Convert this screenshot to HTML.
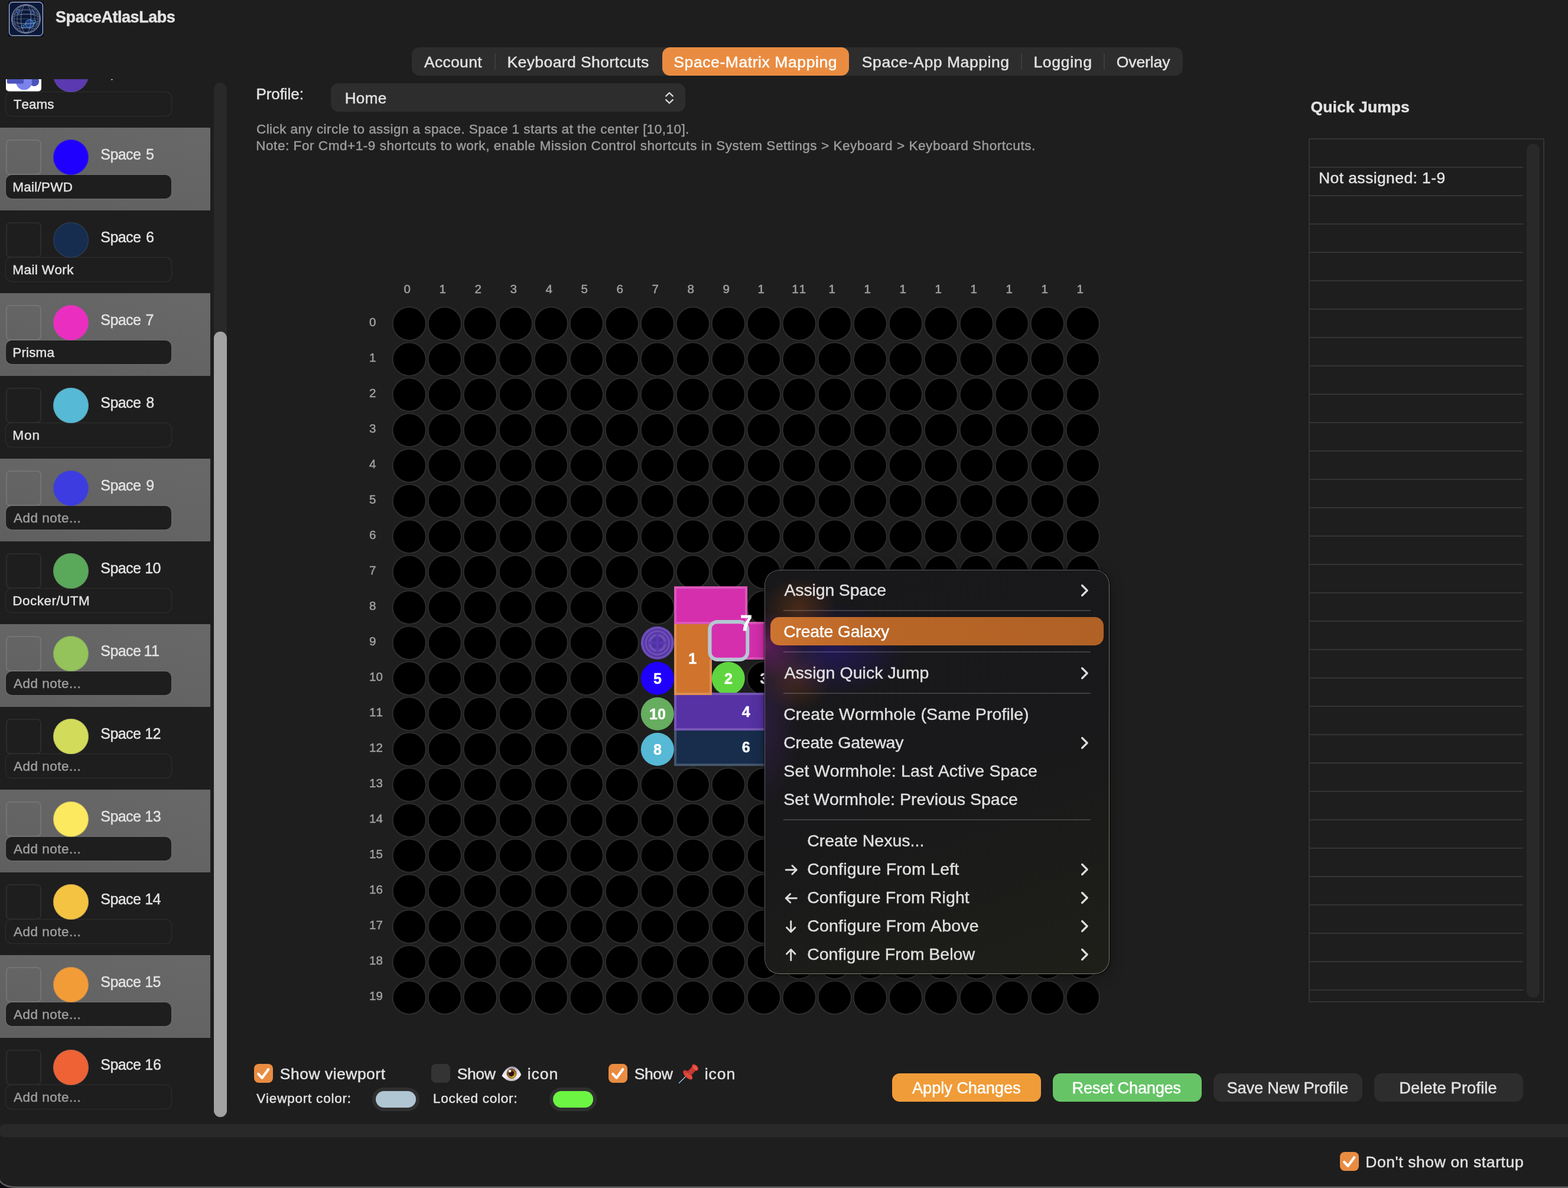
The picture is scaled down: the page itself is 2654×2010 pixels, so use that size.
<!DOCTYPE html>
<html lang="en"><head><meta charset="utf-8"><title>SpaceAtlasLabs</title>
<style>
*{box-sizing:border-box;margin:0;padding:0}
html,body{width:2654px;height:2010px;overflow:hidden;background:#1e1e1e}
body{font-family:"Liberation Sans",sans-serif;color:#e2e2e2;position:relative;-webkit-font-smoothing:antialiased}
.a,.t{position:absolute}
.t{white-space:nowrap;display:block;font-weight:400;font-kerning:none;-webkit-text-stroke:.45px currentColor}
svg text{font-family:"Liberation Sans",sans-serif;font-kerning:none;stroke:currentColor;stroke-width:.5px;paint-order:stroke}
#app{position:absolute;left:0;top:0;width:2654px;height:2010px;overflow:hidden;background:#1e1e1e;will-change:transform;transform:translateZ(0)}
.tabs{left:697px;top:80px;width:1305px;height:48px;border-radius:13px;background:#2d2d2d}
.tabsel{left:1121px;top:80px;width:316px;height:48px;border-radius:13px;background:#e98c41}
.sep{width:2px;height:28px;top:90px;background:#3d3d3d;border-radius:1px}
.select{left:560px;top:141px;width:600px;height:48px;border-radius:13px;background:#2d2d2d}
.sidebar{left:0;top:134px;width:360px;height:1762px;overflow:hidden}
.row{position:absolute;left:0;width:356px;height:140px}
.row.hl{background:linear-gradient(15deg,#5f5f5f 0%,#646464 45%,#686868 100%)}
.box{position:absolute;left:10px;top:20px;width:60px;height:59.500px;border-radius:7px;border:2px solid #2c2c2c;background:#1e1e1e}
.hl .box{border-color:#747474;background:transparent}
.dot{position:absolute;left:90px;top:20px;width:60px;height:60px;border-radius:50%;box-shadow:inset 0 0 0 1px rgba(110,110,110,.35)}
.note{position:absolute;left:10px;top:80px;width:280px;height:40px;border-radius:10px;background:#1e1e1e;box-shadow:0 0 0 1.3px #2c2c2c}
.hl .note{box-shadow:0 0 0 1.3px #6c6c6c}
.track{left:362px;top:140px;width:22px;height:1750px;border-radius:11px;background:#292929}
.thumb{left:362px;top:561px;width:22px;height:1329px;border-radius:11px;background:#a3a3a3}
.cb{width:32px;height:32px;border-radius:8px;background:#e98c41}
.cb.off{background:#343434}
.well{width:80px;height:40px;border-radius:20px;background:#2f2f2f}
.well i{position:absolute;left:6px;top:6px;width:68px;height:28px;border-radius:14px;display:block}
.btn{top:1816px;width:252px;height:48px;border-radius:13px;background:#2d2d2d}
.band{left:0;top:1902px;width:2654px;height:22px;background:#292929;border-radius:7px 0 0 7px}
.qj{left:2214.500px;top:233.500px;width:399.500px;height:1462.500px;border:2px solid #333}
.qline{left:2216px;width:362px;height:2px;background:#343434}
.menu{left:1294px;top:964px;width:584px;height:684px;border-radius:25px;overflow:hidden;
 box-shadow:0 0 0 1px rgba(0,0,0,.55),0 6px 26px rgba(0,0,0,.28),0 0 6px rgba(0,0,0,.35);
 background:
  radial-gradient(ellipse 62px 52px at 58px 64px, rgba(120,60,22,.5), rgba(120,60,22,0) 100%),
  radial-gradient(ellipse 66px 58px at 0px 128px, rgba(155,35,130,.52), rgba(155,35,130,0) 100%),
  radial-gradient(ellipse 130px 78px at 115px 136px, rgba(42,26,130,.55), rgba(42,26,130,0) 100%),
  radial-gradient(ellipse 60px 150px at 0px 255px, rgba(75,40,125,.34), rgba(75,40,125,0) 100%),
  radial-gradient(ellipse 62px 60px at 52px 182px, rgba(125,62,30,.45), rgba(125,62,30,0) 100%),
  linear-gradient(160deg, #18171a 0%, #19181a 50%, #1e1f19 100%)}
.menu:after{content:"";position:absolute;inset:0;border-radius:25px;border:1.6px solid;border-color:rgba(255,255,255,.33) rgba(225,225,200,.5) rgba(225,225,200,.52) rgba(255,255,255,.3);pointer-events:none}
.mhl{left:10px;top:80px;width:564px;height:48px;border-radius:15px;background:linear-gradient(90deg,#cd7430 0%,#b96627 30%,#b06126 100%)}
.msep{left:32px;width:520px;height:2px;background:rgba(255,255,255,.17)}
svg{position:absolute;overflow:visible}
</style></head><body><div id="app">
<header>
<svg class="logo" style="left:14px;top:2px" width="60" height="60" viewBox="0 0 60 60">
<rect width="60" height="60" fill="#091229"/>
<rect x="1.6" y="1.6" width="56.8" height="56.8" rx="6" fill="#0b1838" stroke="#b4c0dc" stroke-width="1.2"/>
<ellipse cx="36" cy="38.3" rx="11.5" ry="3.4" transform="rotate(-24 36 38.3)" fill="none" stroke="#3b9ce0" stroke-width=".9"/>
<circle cx="36" cy="38.3" r="6.9" fill="#1d3c84" stroke="#46a4e6" stroke-width="1"/>
<g fill="#132a62" fill-opacity=".7" stroke="#5a86d0" stroke-width=".8"><circle cx="17" cy="17.5" r="3.2"/><circle cx="41" cy="19" r="2.9"/><circle cx="24.500" cy="43" r="2.6"/></g>
<g fill="none" stroke="#b0bbd6" opacity=".72">
<circle cx="30" cy="30" r="24.2" stroke-width="1.3"/>
<circle cx="30" cy="30" r="22.6" stroke-width=".6"/>
<ellipse cx="30" cy="30" rx="8.5" ry="24" stroke-width=".8"/>
<ellipse cx="30" cy="30" rx="15" ry="24" stroke-width=".6"/>
<ellipse cx="30" cy="30" rx="20" ry="24" stroke-width=".5"/>
<ellipse cx="30" cy="30" rx="24" ry="8" stroke-width=".7"/>
<ellipse cx="30" cy="30" rx="24" ry="15" stroke-width=".6"/>
<path d="M9 22H51M7 30H53M9 38H51M14 14H46M14 46H46" stroke-width=".5"/>
</g>
</svg>
<h1 class="t" style="left:94.06px;top:13px;font-size:27px;line-height:32px;letter-spacing:-0.443px;color:#e2e2e2;font-weight:700;">SpaceAtlasLabs</h1>
</header>
<nav>
<div class="a tabs"></div><div class="a tabsel"></div>
<div class="a sep" style="left:837px"></div>
<div class="a sep" style="left:1728px"></div>
<div class="a sep" style="left:1868px"></div>
<span class="t" style="left:718.00px;top:89px;font-size:26.5px;line-height:32px;letter-spacing:0.295px;color:#e2e2e2;">Account</span>
<span class="t" style="left:858.43px;top:89px;font-size:26.5px;line-height:32px;letter-spacing:0.416px;color:#e2e2e2;">Keyboard Shortcuts</span>
<span class="t" style="left:1140.36px;top:89px;font-size:26.5px;line-height:32px;letter-spacing:0.580px;color:#ffffff;">Space-Matrix Mapping</span>
<span class="t" style="left:1458.86px;top:89px;font-size:26.5px;line-height:32px;letter-spacing:0.563px;color:#e2e2e2;">Space-App Mapping</span>
<span class="t" style="left:1749.43px;top:89px;font-size:26.5px;line-height:32px;letter-spacing:0.709px;color:#e2e2e2;">Logging</span>
<span class="t" style="left:1889.86px;top:89px;font-size:26.5px;line-height:32px;letter-spacing:-0.126px;color:#e2e2e2;">Overlay</span>
</nav>
<aside class="a sidebar">
<div class="row" style="top:-58px">
<div class="note"></div>
<svg style="left:10px;top:20px" width="60" height="59" viewBox="0 0 60 59"><path d="M0 0H60V53.500a5 5 0 0 1-5 5H5a5 5 0 0 1-5-5Z" fill="#fff"/>
<circle cx="47.9" cy="41.7" r="8.2" fill="#4b53bc"/><circle cx="30.7" cy="42.6" r="13.5" fill="#7b83eb"/><rect x="1.8" y="19" width="28.500" height="27" rx="2.500" fill="#3d45a8" opacity=".35"/><rect x="1.8" y="18" width="28" height="27.3" rx="2.500" fill="#4b53bc"/></svg>
<div class="dot" style="background:#5b39b0"></div>
<label class="lbl"><span class="t" style="left:170.33px;top:30px;font-size:25px;line-height:30px;letter-spacing:-0.576px;color:#e2e2e2;">Space</span> <span class="t" style="left:247.32px;top:30px;font-size:25px;line-height:30px;letter-spacing:0.000px;color:#e2e2e2;">4</span></label>
<span class="t" style="left:22.67px;top:87px;font-size:22.5px;line-height:27px;letter-spacing:0.037px;color:#e2e2e2;">Teams</span>
</div>
<div class="row hl" style="top:82px">
<div class="note"></div>
<div class="box"></div>
<div class="dot" style="background:#1f00ff"></div>
<label class="lbl"><span class="t" style="left:170.33px;top:30px;font-size:25px;line-height:30px;letter-spacing:-0.576px;color:#e2e2e2;">Space</span> <span class="t" style="left:247.12px;top:30px;font-size:25px;line-height:30px;letter-spacing:0.000px;color:#e2e2e2;">5</span></label>
<span class="t" style="left:21.35px;top:87px;font-size:22.5px;line-height:27px;letter-spacing:0.227px;color:#e2e2e2;">Mail/PWD</span>
</div>
<div class="row" style="top:222px">
<div class="note"></div>
<div class="box"></div>
<div class="dot" style="background:#172d4f"></div>
<label class="lbl"><span class="t" style="left:170.33px;top:30px;font-size:25px;line-height:30px;letter-spacing:-0.576px;color:#e2e2e2;">Space</span> <span class="t" style="left:247.12px;top:30px;font-size:25px;line-height:30px;letter-spacing:0.000px;color:#e2e2e2;">6</span></label>
<span class="t" style="left:21.35px;top:87px;font-size:22.5px;line-height:27px;letter-spacing:0.394px;color:#e2e2e2;">Mail Work</span>
</div>
<div class="row hl" style="top:362px">
<div class="note"></div>
<div class="box"></div>
<div class="dot" style="background:#ea2fc0"></div>
<label class="lbl"><span class="t" style="left:170.33px;top:30px;font-size:25px;line-height:30px;letter-spacing:-0.576px;color:#e2e2e2;">Space</span> <span class="t" style="left:246.47px;top:30px;font-size:25px;line-height:30px;letter-spacing:0.000px;color:#e2e2e2;">7</span></label>
<span class="t" style="left:21.35px;top:87px;font-size:22.5px;line-height:27px;letter-spacing:0.115px;color:#e2e2e2;">Prisma</span>
</div>
<div class="row" style="top:502px">
<div class="note"></div>
<div class="box"></div>
<div class="dot" style="background:#56b9d5"></div>
<label class="lbl"><span class="t" style="left:170.33px;top:30px;font-size:25px;line-height:30px;letter-spacing:-0.576px;color:#e2e2e2;">Space</span> <span class="t" style="left:247.22px;top:30px;font-size:25px;line-height:30px;letter-spacing:0.000px;color:#e2e2e2;">8</span></label>
<span class="t" style="left:21.35px;top:87px;font-size:22.5px;line-height:27px;letter-spacing:1.008px;color:#e2e2e2;">Mon</span>
</div>
<div class="row hl" style="top:642px">
<div class="note"></div>
<div class="box"></div>
<div class="dot" style="background:#3c3ce0"></div>
<label class="lbl"><span class="t" style="left:170.33px;top:30px;font-size:25px;line-height:30px;letter-spacing:-0.576px;color:#e2e2e2;">Space</span> <span class="t" style="left:247.22px;top:30px;font-size:25px;line-height:30px;letter-spacing:0.000px;color:#e2e2e2;">9</span></label>
<span class="t" style="left:23.11px;top:87px;font-size:22.5px;line-height:27px;letter-spacing:0.469px;color:#9e9e9e;">Add note...</span>
</div>
<div class="row" style="top:782px">
<div class="note"></div>
<div class="box"></div>
<div class="dot" style="background:#5aa85a"></div>
<label class="lbl"><span class="t" style="left:170.33px;top:30px;font-size:25px;line-height:30px;letter-spacing:-0.576px;color:#e2e2e2;">Space</span> <span class="t" style="left:245.34px;top:30px;font-size:25px;line-height:30px;letter-spacing:-0.639px;color:#e2e2e2;">10</span></label>
<span class="t" style="left:21.35px;top:87px;font-size:22.5px;line-height:27px;letter-spacing:0.462px;color:#e2e2e2;">Docker/UTM</span>
</div>
<div class="row hl" style="top:922px">
<div class="note"></div>
<div class="box"></div>
<div class="dot" style="background:#93c35a"></div>
<label class="lbl"><span class="t" style="left:170.33px;top:30px;font-size:25px;line-height:30px;letter-spacing:-0.576px;color:#e2e2e2;">Space</span> <span class="t" style="left:243.52px;top:30px;font-size:25px;line-height:30px;letter-spacing:-1.300px;color:#e2e2e2;">11</span></label>
<span class="t" style="left:23.11px;top:87px;font-size:22.5px;line-height:27px;letter-spacing:0.469px;color:#9e9e9e;">Add note...</span>
</div>
<div class="row" style="top:1062px">
<div class="note"></div>
<div class="box"></div>
<div class="dot" style="background:#d3dc5a"></div>
<label class="lbl"><span class="t" style="left:170.33px;top:30px;font-size:25px;line-height:30px;letter-spacing:-0.576px;color:#e2e2e2;">Space</span> <span class="t" style="left:245.34px;top:30px;font-size:25px;line-height:30px;letter-spacing:-0.744px;color:#e2e2e2;">12</span></label>
<span class="t" style="left:23.11px;top:87px;font-size:22.5px;line-height:27px;letter-spacing:0.469px;color:#9e9e9e;">Add note...</span>
</div>
<div class="row hl" style="top:1202px">
<div class="note"></div>
<div class="box"></div>
<div class="dot" style="background:#fde95f"></div>
<label class="lbl"><span class="t" style="left:170.33px;top:30px;font-size:25px;line-height:30px;letter-spacing:-0.576px;color:#e2e2e2;">Space</span> <span class="t" style="left:245.34px;top:30px;font-size:25px;line-height:30px;letter-spacing:-0.541px;color:#e2e2e2;">13</span></label>
<span class="t" style="left:23.11px;top:87px;font-size:22.5px;line-height:27px;letter-spacing:0.469px;color:#9e9e9e;">Add note...</span>
</div>
<div class="row" style="top:1342px">
<div class="note"></div>
<div class="box"></div>
<div class="dot" style="background:#f5c342"></div>
<label class="lbl"><span class="t" style="left:170.33px;top:30px;font-size:25px;line-height:30px;letter-spacing:-0.576px;color:#e2e2e2;">Space</span> <span class="t" style="left:245.34px;top:30px;font-size:25px;line-height:30px;letter-spacing:-0.632px;color:#e2e2e2;">14</span></label>
<span class="t" style="left:23.11px;top:87px;font-size:22.5px;line-height:27px;letter-spacing:0.469px;color:#9e9e9e;">Add note...</span>
</div>
<div class="row hl" style="top:1482px">
<div class="note"></div>
<div class="box"></div>
<div class="dot" style="background:#f29c38"></div>
<label class="lbl"><span class="t" style="left:170.33px;top:30px;font-size:25px;line-height:30px;letter-spacing:-0.576px;color:#e2e2e2;">Space</span> <span class="t" style="left:245.34px;top:30px;font-size:25px;line-height:30px;letter-spacing:-0.639px;color:#e2e2e2;">15</span></label>
<span class="t" style="left:23.11px;top:87px;font-size:22.5px;line-height:27px;letter-spacing:0.469px;color:#9e9e9e;">Add note...</span>
</div>
<div class="row" style="top:1622px">
<div class="note"></div>
<div class="box"></div>
<div class="dot" style="background:#ee6236"></div>
<label class="lbl"><span class="t" style="left:170.33px;top:30px;font-size:25px;line-height:30px;letter-spacing:-0.576px;color:#e2e2e2;">Space</span> <span class="t" style="left:245.34px;top:30px;font-size:25px;line-height:30px;letter-spacing:-0.241px;color:#e2e2e2;">16</span></label>
<span class="t" style="left:23.11px;top:87px;font-size:22.5px;line-height:27px;letter-spacing:0.469px;color:#9e9e9e;">Add note...</span>
</div>
</aside>
<div class="a track"></div><div class="a thumb"></div>
<main>
<label class="t" style="left:433.47px;top:143px;font-size:26px;line-height:32px;letter-spacing:-0.070px;color:#e2e2e2;">Profile:</label>
<div class="a select"></div>
<span class="t" style="left:583.67px;top:150px;font-size:26px;line-height:32px;letter-spacing:0.411px;color:#e2e2e2;">Home</span>
<svg style="left:1125px;top:154px" width="16" height="23.500" viewBox="0 0 18 26"><path d="M2.5 9.5L9 3.2L15.5 9.5M2.5 16.5L9 22.8L15.5 16.5" fill="none" stroke="#dcdcdc" stroke-width="2.6" stroke-linecap="round" stroke-linejoin="round"/></svg>
<p class="t" style="left:433.96px;top:205px;font-size:22.5px;line-height:27px;letter-spacing:0.445px;color:#9c9c9c;">Click any circle to assign a space. Space 1 starts at the center [10,10].</p>
<p class="t" style="left:433.25px;top:233px;font-size:22.5px;line-height:27px;letter-spacing:0.555px;color:#9c9c9c;">Note: For Cmd+1-9 shortcuts to work, enable Mission Control shortcuts in System Settings &gt; Keyboard &gt; Keyboard Shortcuts.</p>
<svg class="grid" style="left:0;top:0" width="2654" height="2010" viewBox="0 0 2654 2010">
<defs><pattern id="cell" x="662.75" y="517.75" width="60" height="60" patternUnits="userSpaceOnUse"><circle cx="30" cy="30" r="28.1" fill="#000" stroke="#383838" stroke-width="1.4"/></pattern></defs>
<rect x="662.75" y="517.75" width="1200" height="1200" fill="url(#cell)"/>
<g font-size="20.5" fill="#a0a0a0" color="#a0a0a0">
<text x="689.3" y="496.2" text-anchor="middle">0</text>
<text x="749.3" y="496.2" text-anchor="middle">1</text>
<text x="809.3" y="496.2" text-anchor="middle">2</text>
<text x="869.3" y="496.2" text-anchor="middle">3</text>
<text x="929.3" y="496.2" text-anchor="middle">4</text>
<text x="989.3" y="496.2" text-anchor="middle">5</text>
<text x="1049.3" y="496.2" text-anchor="middle">6</text>
<text x="1109.3" y="496.2" text-anchor="middle">7</text>
<text x="1169.3" y="496.2" text-anchor="middle">8</text>
<text x="1229.3" y="496.2" text-anchor="middle">9</text>
<text x="1288.3" y="496.2" text-anchor="middle">1</text>
<text x="1352.7" y="496.2" text-anchor="middle" letter-spacing="1">11</text>
<text x="1408.3" y="496.2" text-anchor="middle">1</text>
<text x="1468.3" y="496.2" text-anchor="middle">1</text>
<text x="1528.3" y="496.2" text-anchor="middle">1</text>
<text x="1588.3" y="496.2" text-anchor="middle">1</text>
<text x="1648.3" y="496.2" text-anchor="middle">1</text>
<text x="1708.3" y="496.2" text-anchor="middle">1</text>
<text x="1768.3" y="496.2" text-anchor="middle">1</text>
<text x="1828.3" y="496.2" text-anchor="middle">1</text>
<text x="625" y="552.4">0</text>
<text x="625" y="612.4">1</text>
<text x="625" y="672.4">2</text>
<text x="625" y="732.4">3</text>
<text x="625" y="792.4">4</text>
<text x="625" y="852.4">5</text>
<text x="625" y="912.4">6</text>
<text x="625" y="972.4">7</text>
<text x="625" y="1032.4">8</text>
<text x="625" y="1092.4">9</text>
<text x="625" y="1152.4">10</text>
<text x="625" y="1212.4">11</text>
<text x="625" y="1272.4">12</text>
<text x="625" y="1332.4">13</text>
<text x="625" y="1392.4">14</text>
<text x="625" y="1452.4">15</text>
<text x="625" y="1512.4">16</text>
<text x="625" y="1572.4">17</text>
<text x="625" y="1632.4">18</text>
<text x="625" y="1692.4">19</text>
</g>
<rect x="1204.75" y="1118.75" width="58" height="58" fill="#1e1e1e"/>
<circle cx="1232.75" cy="1147.75" r="28" fill="#5fd63f"/>
<rect x="1143" y="1234" width="240" height="60" fill="#172d4b" stroke="#44566e" stroke-width="4"/>
<rect x="1143" y="1174" width="240" height="60" fill="#5632a4" stroke="#7657b5" stroke-width="4"/>
<rect x="1143" y="1054" width="60" height="120" fill="#cf732d" stroke="#dd8f52" stroke-width="4"/>
<rect x="1203" y="1054" width="180" height="60" fill="#d52fae" stroke="#dc56bb" stroke-width="4"/>
<rect x="1143" y="994" width="120" height="60" fill="#d52fae" stroke="#dc56bb" stroke-width="4"/>
<rect x="1145" y="1052" width="56" height="4" fill="#dc56bb"/>
<rect x="1082.75" y="1057.75" width="58" height="240" fill="#1e1e1e"/>
<circle cx="1112.75" cy="1087.75" r="28" fill="#6c4db5"/>
<g fill="none" stroke="#5031a3" stroke-width="1.9"><circle cx="1112.75" cy="1087.75" r="22.6"/><circle cx="1112.75" cy="1087.75" r="16.8"/></g>
<circle cx="1112.75" cy="1087.75" r="10.8" fill="#4f33a1"/>
<path d="M1097.75 1087.75h30M1112.75 1072.75v30" stroke="#5b38b5" stroke-width="4" fill="none"/>
<circle cx="1112.75" cy="1147.75" r="28" fill="#1f00ff"/>
<circle cx="1112.75" cy="1207.75" r="28" fill="#66ad5f"/>
<circle cx="1112.75" cy="1267.75" r="28" fill="#56b9d6"/>
<g font-weight="700" font-size="25" fill="#fff" color="#fff" text-anchor="middle">
<text x="1113" y="1157.4">5</text>
<text x="1113" y="1217.2">10</text>
<text x="1113" y="1277.3">8</text>
<text x="1233" y="1157.4">2</text>
<text x="1293.5" y="1157.4">3</text>
<text x="1172.3" y="1123">1</text>
<text x="1262.6" y="1213">4</text>
<text x="1262.6" y="1273">6</text>
</g>
<rect x="1201.3" y="1051.9" width="64" height="64" rx="13" fill="none" stroke="#b3c8d2" stroke-width="6"/>
<text x="1263" y="1067" font-size="37" font-weight="700" fill="#fff" color="#fff" text-anchor="middle">7</text>
</svg>
<div class="a cb" style="left:430px;top:1800px"><svg style="left:0;top:0" width="32" height="32" viewBox="0 0 32 32"><path d="M7.2 17L13.6 23.8L24.2 9.2" fill="none" stroke="#fff" stroke-width="4.2" stroke-linecap="round" stroke-linejoin="round"/></svg></div>
<label class="t" style="left:473.86px;top:1801px;font-size:26.5px;line-height:32px;letter-spacing:0.486px;color:#e2e2e2;">Show viewport</label>
<div class="a cb off" style="left:730px;top:1800px"></div>
<label class="t" style="left:773.86px;top:1801px;font-size:26.5px;line-height:32px;letter-spacing:-0.453px;color:#e2e2e2;">Show</label>
<svg role="img" aria-label="👁" style="left:848px;top:1802px" width="36" height="30" viewBox="0 0 36 30"><defs>
<linearGradient id="ew" x1="0" y1="0" x2="0" y2="1"><stop offset="0" stop-color="#8f8a9c"/><stop offset=".3" stop-color="#dcdae2"/><stop offset=".7" stop-color="#f6f4f6"/><stop offset="1" stop-color="#b9aeb2"/></linearGradient>
<linearGradient id="ei" x1="0.2" y1="0" x2="0.8" y2="1"><stop offset="0" stop-color="#6e4320"/><stop offset=".5" stop-color="#9a6a22"/><stop offset="1" stop-color="#ecc832"/></linearGradient></defs>
<path d="M1.4 18.2C5.5 9 11.5 2.2 18.5 2.2C25.500 2.2 31 8 34.2 16.2C30.500 23 25 27.2 18 27.2C11 27.2 6 23.2 1.4 18.2Z" fill="url(#ew)"/>
<circle cx="18" cy="14.4" r="8" fill="url(#ei)" stroke="#5e3714" stroke-width=".9"/><circle cx="17.5" cy="14.5" r="4.7" fill="#2a0e14"/><circle cx="15" cy="10.2" r="2.2" fill="#fff"/></svg>
<label class="t" style="left:892.64px;top:1801px;font-size:26.5px;line-height:32px;letter-spacing:1.014px;color:#e2e2e2;">icon</label>
<div class="a cb" style="left:1030px;top:1800px"><svg style="left:0;top:0" width="32" height="32" viewBox="0 0 32 32"><path d="M7.2 17L13.6 23.8L24.2 9.2" fill="none" stroke="#fff" stroke-width="4.2" stroke-linecap="round" stroke-linejoin="round"/></svg></div>
<label class="t" style="left:1073.86px;top:1801px;font-size:26.5px;line-height:32px;letter-spacing:-0.453px;color:#e2e2e2;">Show</label>
<svg role="img" aria-label="📌" style="left:1148px;top:1798px" width="36" height="36" viewBox="0 0 36 36"><defs>
<linearGradient id="pr" x1="0" y1="0" x2="1" y2="1"><stop offset="0" stop-color="#b82c22"/><stop offset=".55" stop-color="#e6453a"/><stop offset="1" stop-color="#d03a30"/></linearGradient></defs>
<path d="M1.3 34.500L16 20" stroke="#a5c2e2" stroke-width="1.35" stroke-linecap="round" fill="none"/>
<ellipse cx="16.2" cy="20.6" rx="10.2" ry="4.8" transform="rotate(45 16.2 20.6)" fill="url(#pr)"/>
<path d="M15 15.5L24.500 6L30.500 12L21.500 22Z" fill="#c9362b"/>
<ellipse cx="28.4" cy="8.2" rx="6.3" ry="4.2" transform="rotate(45 28.4 8.2)" fill="#de4236"/>
<ellipse cx="18" cy="22.6" rx="7" ry="2.8" transform="rotate(45 18 22.6)" fill="#e2503f" opacity=".75"/>
<ellipse cx="29.2" cy="8.8" rx="4" ry="2.1" transform="rotate(45 29.2 8.8)" fill="#ec5a4a"/>
<path d="M15.5 21L24 12.500" stroke="#9a5a78" stroke-width="1.1" stroke-linecap="round" fill="none" opacity=".7"/></svg>
<label class="t" style="left:1192.64px;top:1801px;font-size:26.5px;line-height:32px;letter-spacing:1.014px;color:#e2e2e2;">icon</label>
<span class="t" style="left:434.31px;top:1845px;font-size:22.5px;line-height:27px;letter-spacing:0.780px;color:#e2e2e2;">Viewport color:</span>
<div class="a well" style="left:630px;top:1840px"><i style="background:#b0c6d2"></i></div>
<span class="t" style="left:732.95px;top:1845px;font-size:22.5px;line-height:27px;letter-spacing:0.729px;color:#e2e2e2;">Locked color:</span>
<div class="a well" style="left:930px;top:1840px"><i style="background:#6cf542"></i></div>
<div class="a btn" style="left:1510px;background:#f09c38"></div>
<span class="t" style="left:1544.04px;top:1824px;font-size:27.3px;line-height:33px;letter-spacing:-0.128px;color:#ffffff;">Apply Changes</span>
<div class="a btn" style="left:1782px;background:#66c466"></div>
<span class="t" style="left:1814.56px;top:1824px;font-size:27.3px;line-height:33px;letter-spacing:-0.307px;color:#ffffff;">Reset Changes</span>
<div class="a btn" style="left:2054px;background:#2d2d2d"></div>
<span class="t" style="left:2076.62px;top:1824px;font-size:27.3px;line-height:33px;letter-spacing:-0.246px;color:#e2e2e2;">Save New Profile</span>
<div class="a btn" style="left:2326px;background:#2d2d2d"></div>
<span class="t" style="left:2368.16px;top:1824px;font-size:27.3px;line-height:33px;letter-spacing:0.129px;color:#e2e2e2;">Delete Profile</span>
</main>
<section>
<h2 class="t" style="left:2218.56px;top:165px;font-size:26.5px;line-height:32px;letter-spacing:0.089px;color:#e2e2e2;font-weight:700;">Quick Jumps</h2>
<div class="a qj"></div>
<div class="a qline" style="top:282px"></div>
<div class="a qline" style="top:330px"></div>
<div class="a qline" style="top:378px"></div>
<div class="a qline" style="top:426px"></div>
<div class="a qline" style="top:474px"></div>
<div class="a qline" style="top:522px"></div>
<div class="a qline" style="top:570px"></div>
<div class="a qline" style="top:618px"></div>
<div class="a qline" style="top:666px"></div>
<div class="a qline" style="top:714px"></div>
<div class="a qline" style="top:762px"></div>
<div class="a qline" style="top:810px"></div>
<div class="a qline" style="top:858px"></div>
<div class="a qline" style="top:906px"></div>
<div class="a qline" style="top:954px"></div>
<div class="a qline" style="top:1002px"></div>
<div class="a qline" style="top:1050px"></div>
<div class="a qline" style="top:1098px"></div>
<div class="a qline" style="top:1146px"></div>
<div class="a qline" style="top:1194px"></div>
<div class="a qline" style="top:1242px"></div>
<div class="a qline" style="top:1290px"></div>
<div class="a qline" style="top:1338px"></div>
<div class="a qline" style="top:1386px"></div>
<div class="a qline" style="top:1434px"></div>
<div class="a qline" style="top:1482px"></div>
<div class="a qline" style="top:1530px"></div>
<div class="a qline" style="top:1578px"></div>
<div class="a qline" style="top:1626px"></div>
<div class="a qline" style="top:1674px"></div>
<div class="a track" style="left:2584px;top:243px;height:1445px"></div>
<span class="t" style="left:2232.03px;top:285px;font-size:26.5px;line-height:32px;letter-spacing:0.403px;color:#e2e2e2;">Not assigned: 1-9</span>
</section>
<footer>
<div class="a band"></div>
<div class="a cb" style="left:2268px;top:1949px"><svg style="left:0;top:0" width="32" height="32" viewBox="0 0 32 32"><path d="M7.2 17L13.6 23.8L24.2 9.2" fill="none" stroke="#fff" stroke-width="4.2" stroke-linecap="round" stroke-linejoin="round"/></svg></div>
<label class="t" style="left:2311.18px;top:1950px;font-size:26.5px;line-height:32px;letter-spacing:0.599px;color:#e2e2e2;">Don&#x27;t show on startup</label>
<svg style="left:0;top:1970px" width="2654" height="40" viewBox="0 0 2654 40"><path d="M0 40V27C3 33 11 38.2 27 38.2H2654V40Z" fill="#0d0b0f"/><path d="M-1 26.500C2 33 11 38.6 27 38.6H2654" fill="none" stroke="#5c5c5c" stroke-width="2.6"/></svg>
</footer>
<div class="a menu" role="menu">
<div class="a mhl"></div>
<div class="a msep" style="top:68px"></div>
<div class="a msep" style="top:138px"></div>
<div class="a msep" style="top:208px"></div>
<div class="a msep" style="top:422px"></div>
<span class="t" style="left:33.49px;top:17px;font-size:28.5px;line-height:34px;letter-spacing:-0.154px;color:#dfdfdf;">Assign Space</span>
<svg style="left:535px;top:23.8px" width="14" height="22" viewBox="0 0 14 22"><path d="M2.6 2.500L11.2 11L2.6 19.500" fill="none" stroke="#dcdcdc" stroke-width="3.3" stroke-linecap="round" stroke-linejoin="round"/></svg>
<span class="t" style="left:32.15px;top:87px;font-size:28.5px;line-height:34px;letter-spacing:-0.263px;color:#ffffff;">Create Galaxy</span>
<span class="t" style="left:33.49px;top:157px;font-size:28.5px;line-height:34px;letter-spacing:0.065px;color:#dfdfdf;">Assign Quick Jump</span>
<svg style="left:535px;top:163.8px" width="14" height="22" viewBox="0 0 14 22"><path d="M2.6 2.500L11.2 11L2.6 19.500" fill="none" stroke="#dcdcdc" stroke-width="3.3" stroke-linecap="round" stroke-linejoin="round"/></svg>
<span class="t" style="left:32.15px;top:227px;font-size:28.5px;line-height:34px;letter-spacing:0.072px;color:#dfdfdf;">Create Wormhole (Same Profile)</span>
<span class="t" style="left:32.15px;top:275px;font-size:28.5px;line-height:34px;letter-spacing:-0.205px;color:#dfdfdf;">Create Gateway</span>
<svg style="left:535px;top:281.8px" width="14" height="22" viewBox="0 0 14 22"><path d="M2.6 2.500L11.2 11L2.6 19.500" fill="none" stroke="#dcdcdc" stroke-width="3.3" stroke-linecap="round" stroke-linejoin="round"/></svg>
<span class="t" style="left:32.26px;top:323px;font-size:28.5px;line-height:34px;letter-spacing:0.171px;color:#dfdfdf;">Set Wormhole: Last Active Space</span>
<span class="t" style="left:32.26px;top:371px;font-size:28.5px;line-height:34px;letter-spacing:0.021px;color:#dfdfdf;">Set Wormhole: Previous Space</span>
<span class="t" style="left:72.15px;top:441px;font-size:28.5px;line-height:34px;letter-spacing:0.016px;color:#dfdfdf;">Create Nexus...</span>
<span class="t" style="left:72.15px;top:489px;font-size:28.5px;line-height:34px;letter-spacing:0.205px;color:#dfdfdf;">Configure From Left</span>
<svg style="left:535px;top:495.8px" width="14" height="22" viewBox="0 0 14 22"><path d="M2.6 2.500L11.2 11L2.6 19.500" fill="none" stroke="#dcdcdc" stroke-width="3.3" stroke-linecap="round" stroke-linejoin="round"/></svg>
<svg style="left:34px;top:497.1px" width="22.500" height="21.4" viewBox="0 0 21 20"><path d="M2 10H19M12 3.2L19 10L12 16.8" fill="none" stroke="#dcdcdc" stroke-width="2.7" stroke-linecap="round" stroke-linejoin="round"/></svg>
<span class="t" style="left:72.15px;top:537px;font-size:28.5px;line-height:34px;letter-spacing:0.116px;color:#dfdfdf;">Configure From Right</span>
<svg style="left:535px;top:543.8px" width="14" height="22" viewBox="0 0 14 22"><path d="M2.6 2.500L11.2 11L2.6 19.500" fill="none" stroke="#dcdcdc" stroke-width="3.3" stroke-linecap="round" stroke-linejoin="round"/></svg>
<svg style="left:34px;top:545.1px" width="22.500" height="21.4" viewBox="0 0 21 20"><path d="M19 10H2M9 3.2L2 10L9 16.8" fill="none" stroke="#dcdcdc" stroke-width="2.7" stroke-linecap="round" stroke-linejoin="round"/></svg>
<span class="t" style="left:72.15px;top:585px;font-size:28.5px;line-height:34px;letter-spacing:0.199px;color:#dfdfdf;">Configure From Above</span>
<svg style="left:535px;top:591.8px" width="14" height="22" viewBox="0 0 14 22"><path d="M2.6 2.500L11.2 11L2.6 19.500" fill="none" stroke="#dcdcdc" stroke-width="3.3" stroke-linecap="round" stroke-linejoin="round"/></svg>
<svg style="left:34px;top:593.1px" width="22.500" height="21.4" viewBox="0 0 21 20"><path d="M10 1.5V18.500M3.2 11.5L10 18.500L16.8 11.5" fill="none" stroke="#dcdcdc" stroke-width="2.7" stroke-linecap="round" stroke-linejoin="round"/></svg>
<span class="t" style="left:72.15px;top:633px;font-size:28.5px;line-height:34px;letter-spacing:0.019px;color:#dfdfdf;">Configure From Below</span>
<svg style="left:535px;top:639.8px" width="14" height="22" viewBox="0 0 14 22"><path d="M2.6 2.500L11.2 11L2.6 19.500" fill="none" stroke="#dcdcdc" stroke-width="3.3" stroke-linecap="round" stroke-linejoin="round"/></svg>
<svg style="left:34px;top:641.1px" width="22.500" height="21.4" viewBox="0 0 21 20"><path d="M10 18.500V1.5M3.2 8.5L10 1.5L16.8 8.5" fill="none" stroke="#dcdcdc" stroke-width="2.7" stroke-linecap="round" stroke-linejoin="round"/></svg>
</div>
</div></body></html>
